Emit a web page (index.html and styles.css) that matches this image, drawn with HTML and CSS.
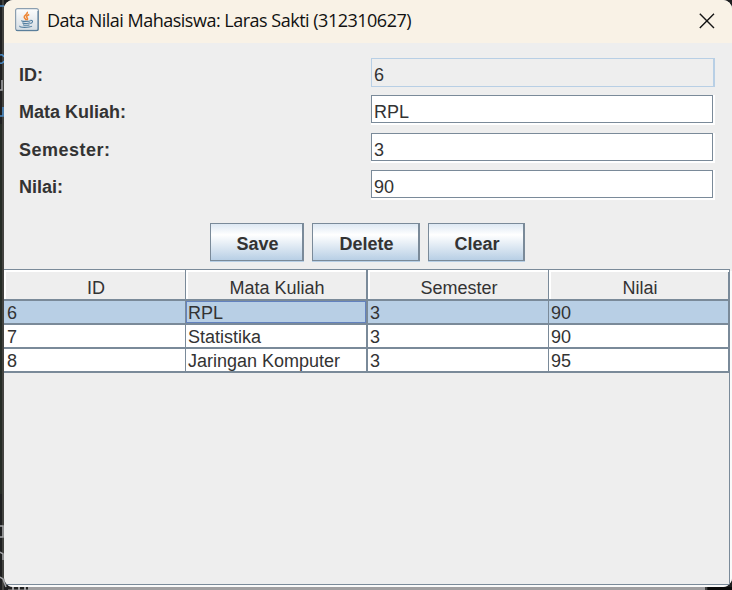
FILE: index.html
```
<!DOCTYPE html>
<html lang="id">
<head>
<meta charset="utf-8">
<title>Data Nilai Mahasiswa</title>
<link rel="stylesheet" href="styles.css">
</head>
<body>
<svg class="backdrop" width="732" height="590" aria-hidden="true">
  <rect width="732" height="590" fill="#1e1f20"/>
  <rect y="124" width="4" height="370" fill="#252b25"/>
  <rect x="2" width="2" height="590" fill="#42423f"/>
  <path d="M0 6h4M0 55q3-1 4 2M0 63q3 1 4-2M0 116h3v-9" fill="none" stroke="#4a89c4" stroke-width="1.6"/>
  <path d="M0 90h2v-10M0 526h3v11H0M0 552l3 2v6M0 577l3 2 3 8" fill="none" stroke="#a5a6a9" stroke-width="1.5"/>
  <rect x="8" y="587" width="699" height="3" fill="#a09fa1"/>
  <path d="M8 588h20" stroke="#222" stroke-width="3" stroke-dasharray="4 2"/>
  <path d="M706 587v3" stroke="#444" stroke-width="2"/>
  <rect x="708" y="587" width="24" height="3" fill="#0c0c0c"/>
</svg>
<main class="window">
  <header class="titlebar">
    <svg class="java" width="24" height="24" viewBox="0 0 24 24">
      <defs><linearGradient id="tile" x1="0" y1="0" x2="0" y2="1"><stop offset="0" stop-color="#fdfdfd"/><stop offset="1" stop-color="#d5dde4"/></linearGradient></defs>
      <rect x=".6" y=".6" width="22.8" height="22" rx="2" fill="url(#tile)" stroke="#8c9fb0" stroke-width="1.2"/>
      <path d="M1 22.4h22V3" fill="none" stroke="#557b99" stroke-width="1"/>
      <path d="M12.3 3.8c1 2.3-3.3 3.4-3.1 5.3.1 1.2 1.6 2 2 3.1M14.2 6.5c-2.7 1.2-3.2 2.2-2 3.5.7.8.4 1.5-.5 2.1" fill="none" stroke="#ee8534" stroke-width="1.5"/>
      <path d="M7 12.6c-1.8.9 7 1.1 8.8 0M7.3 14.7c1.6 1 6 1 7.7 0M8 16.7c1.5.8 5 .8 6.5 0M15.5 12.4c3.2-.4 2.3 2.4-.2 3M5 17.9c-1.6 2 9.5 1.8 12 .2" fill="none" stroke="#527e9f" stroke-width="1.1"/>
    </svg>
    <h1>Data Nilai Mahasiswa: Laras Sakti (312310627)</h1>
    <svg class="close" width="16" height="16" viewBox="0 0 16 16"><path d="M.8.8 15 15M15 .8.8 15" stroke="#151515" stroke-width="1.4"/></svg>
  </header>
  <form class="form">
    <div class="field"><label>ID:</label><div class="input disabled">6</div></div>
    <div class="field"><label>Mata Kuliah:</label><div class="input"><span>RPL</span></div></div>
    <div class="field low"><label class="wide">Semester:</label><div class="input"><span>3</span></div></div>
    <div class="field"><label>Nilai:</label><div class="input"><span>90</span></div></div>
  </form>
  <div class="actions">
    <button class="save" type="button">Save</button>
    <button class="delete" type="button">Delete</button>
    <button class="clear" type="button">Clear</button>
  </div>
  <section class="scroll">
    <div class="row head"><div>ID</div><div>Mata Kuliah</div><div>Semester</div><div>Nilai</div></div>
    <div class="row selected"><div>6</div><div class="focus">RPL</div><div>3</div><div>90</div></div>
    <div class="row"><div>7</div><div>Statistika</div><div>3</div><div>90</div></div>
    <div class="row"><div>8</div><div>Jaringan Komputer</div><div>3</div><div>95</div></div>
  </section>
</main>
</body>
</html>
```
FILE: styles.css
```
* { box-sizing: border-box; }
body { margin: 0; width: 732px; height: 590px; overflow: hidden; font-family: "Liberation Sans", Arial, sans-serif; font-size: 18px; color: #333; }
.backdrop { position: absolute; top: 0; left: 0; z-index: -1; }
.window { margin-left: 4px; width: 728px; height: 587px; background: #eee; border-radius: 9px; overflow: hidden; }
.titlebar { display: flex; height: 43px; background: #f9f2e6; padding: 8px 17px 0 11px; }
.titlebar h1 { margin: 0 0 0 8px; font: 400 18px/25px "Open Sans", sans-serif; letter-spacing: -0.5px; color: #111; white-space: nowrap; }
.close { margin: 5px 0 0 auto; }
.form { height: 180px; padding: 15px 17px 0 15px; }
.field { display: flex; height: 37px; }
.field.low { padding-top: 1px; height: 38px; }
.field label { width: 352px; line-height: 34px; font-weight: bold; }
.field .wide { letter-spacing: 0.5px; }
.input { width: 344px; height: 30px; line-height: 32px; background: #fff; }
.input span { display: block; width: 342px; height: 28px; padding-left: 2px; border: 1px solid #7a8a99; line-height: 33px; }
.disabled { height: 29px; background: #eee; border: 1px solid #b8cfe5; border-right-width: 2px; padding-left: 2px; }
.actions { display: flex; gap: 8px; height: 46px; padding-left: 206px; }
button { height: 38px; margin: 0; padding: 5px 0 0 2px; border: 1px solid #7a8a99; border-right-width: 2px; border-radius: 0; box-shadow: 0 1px #b8cfe5; background: linear-gradient(#dde8f3 0, #fff 30%, #b8cfe5 100%); font: bold 18px "Liberation Sans", Arial, sans-serif; color: #333; }
.save { width: 94px; }
.delete { width: 108px; }
.clear { width: 97px; }
.scroll { width: 726px; height: 316px; border: 1px solid #7a8a99; border-left: 0; box-shadow: 2px 2px #fafafa; }
.row { display: grid; grid-template-columns: 182px 182px 181px 180px; width: 725px; height: 24px; border-bottom: 2px solid #7a8a99; border-right: 1px solid #7a8a99; line-height: 25px; background: #fff; }
.row > div { height: 22px; padding-left: 2px; border-right: 1px solid #7a8a99; }
.row > div:first-child { padding-left: 3px; }
.row > div:nth-child(2) { border-right-width: 2px; }
.row > div:last-child { border-right: 0; }
.head { height: 31px; background: #eee; line-height: 36px; text-align: center; }
.head > div { height: 29px; box-shadow: inset 2px 2px #fff; }
.selected { background: #b8cfe5; }
.selected .focus { box-shadow: inset 0 0 0 1px #6382bf; }
```
